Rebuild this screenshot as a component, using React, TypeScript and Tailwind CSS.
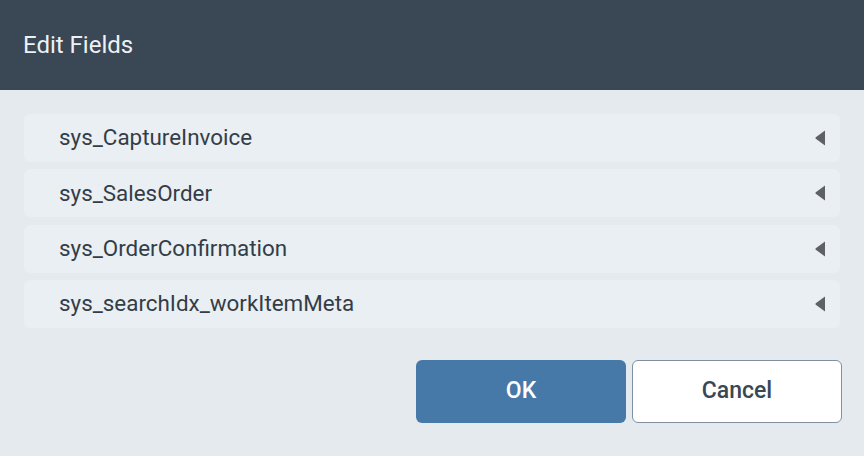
import React from "react";

const fields = [
  "sys_CaptureInvoice",
  "sys_SalesOrder",
  "sys_OrderConfirmation",
  "sys_searchIdx_workItemMeta",
];

export default function App() {
  return (
    <div
      className="w-[864px] h-[456px] bg-[#e5eaee] flex flex-col overflow-hidden"
      style={{ fontFamily: "Roboto, 'Liberation Sans', sans-serif" }}
    >
      <div className="h-[90px] shrink-0 bg-[#3a4754] flex items-center pl-[23px]">
        <h1 className="text-[24px] text-[#eef1f4] font-normal">Edit Fields</h1>
      </div>

      <div className="flex flex-col gap-[7.33px] px-[24px] pt-[24px]">
        {fields.map((name) => (
          <div
            key={name}
            className="h-[48px] bg-[#eaeff3] rounded-[6px] flex items-center justify-between pl-[35px] pr-[15px]"
          >
            <span className="text-[22.4px] text-[#333d48]">{name}</span>
            <svg width="10" height="16" viewBox="0 0 10 16" className="block">
              <path d="M10 0.5 L10 15.5 L0.8 8.8 Q0 8 0.8 7.2 Z" fill="#5d6166" />
            </svg>
          </div>
        ))}
      </div>

      <div className="flex justify-end gap-[6px] pr-[22px] pt-[32px]">
        <button className="w-[210px] h-[63px] rounded-[6px] bg-[#4679a8] text-white text-[23px] font-medium">
          OK
        </button>
        <button className="w-[210px] h-[63px] rounded-[6px] bg-white border border-[#7f90a3] text-[#3a4754] text-[23px] font-medium">
          Cancel
        </button>
      </div>
    </div>
  );
}
